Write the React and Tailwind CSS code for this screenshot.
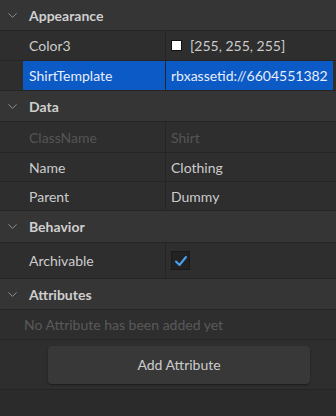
import { ChevronDown } from 'lucide-react';

const font = { fontFamily: '"Source Sans Pro", Lato, "Noto Sans", sans-serif' };

const Section = ({ title, h = 'h-[31px]' }) => (
  <div className={`${h} flex items-center bg-[#353535] border-b border-[#252525]`}>
    <ChevronDown className="w-[15px] h-[15px] ml-[5px] text-[#9a9a9a]" strokeWidth={1.4} />
    <span className="ml-[9px] text-[14px] font-bold text-[#cfcfcf]">{title}</span>
  </div>
);

const Row = ({ label, children, selected, disabled, h = 'h-[30px]' }) => (
  <div className={`${h} flex border-b border-[#252525] bg-[#2e2e2e]`}>
    <div className="w-[23px] shrink-0" />
    <div
      className={`w-[142px] shrink-0 flex items-center pl-[6px] text-[14px] ${
        selected ? 'bg-[#0c5ac6] text-[#e8eefa]' : disabled ? 'text-[#555555]' : 'text-[#cccccc]'
      }`}
    >
      {label}
    </div>
    <div className="w-px bg-[#252525]" />
    <div
      className={`flex-1 flex items-center pl-[5px] text-[14px] mr-[3px] ${
        selected ? 'bg-[#0c5ac6] text-[#e8eefa]' : disabled ? 'text-[#555555]' : 'text-[#cccccc]'
      }`}
    >
      {children}
    </div>
  </div>
);

export default function App() {
  return (
    <div className="w-[336px] h-[416px] bg-[#2b2b2b] overflow-hidden" style={font}>
      <Section title="Appearance" />
      <Row label="Color3">
        <span className="w-[11px] h-[11px] bg-white border border-[#111] mr-[8px]" />
        <span>[255, 255, 255]</span>
      </Row>
      <Row label="ShirtTemplate" selected>
        rbxassetid://6604551382
      </Row>
      <Section title="Data" />
      <Row label="ClassName" disabled h="h-[31px]">
        Shirt
      </Row>
      <Row label="Name" h="h-[29px]">Clothing</Row>
      <Row label="Parent" h="h-[29px]">Dummy</Row>
      <Section title="Behavior" h="h-[32px]" />
      <Row label="Archivable" h="h-[36px]">
        <span className="w-[19px] h-[19px] bg-[#222222] border border-[#1a1a1a] flex items-center justify-center">
          <svg width="14" height="14" viewBox="0 0 14 14" fill="none">
            <path d="M2 7.5 L5.5 11 L12 3" stroke="#4aa3f0" strokeWidth="2" strokeLinecap="round" strokeLinejoin="round" />
          </svg>
        </span>
      </Row>
      <Section title="Attributes" />
      <div className="h-[30px] flex items-center pl-[24px] text-[14px] text-[#5a5a5a] bg-[#2e2e2e] border-b border-[#252525]">
        No Attribute has been added yet
      </div>
      <div className="h-[50px] flex items-center bg-[#2e2e2e] border-b border-[#252525]">
        <button className="ml-[48px] w-[262px] h-[38px] rounded-[4px] bg-[#383838] text-[14px] text-[#cccccc] shadow-[0_1px_2px_rgba(0,0,0,0.4)]">
          Add Attribute
        </button>
      </div>
    </div>
  );
}
